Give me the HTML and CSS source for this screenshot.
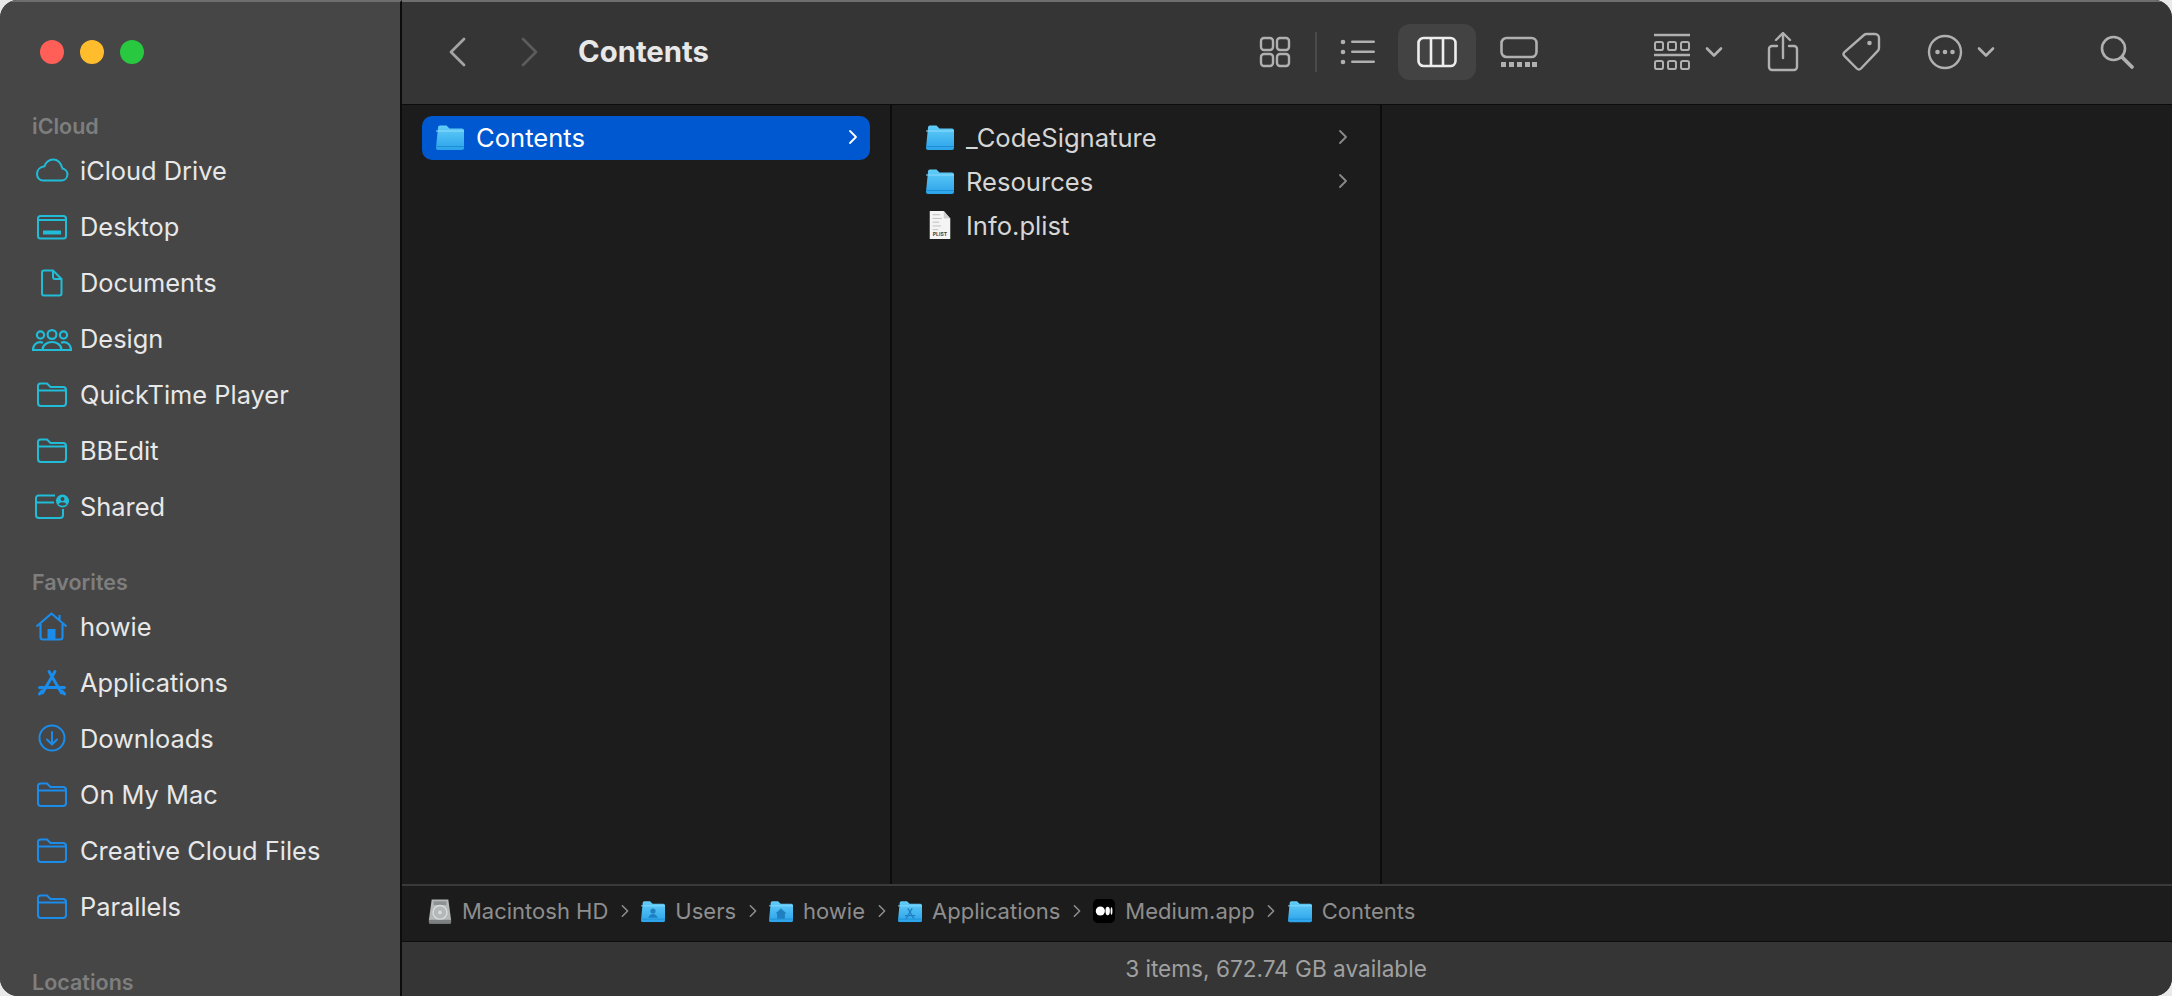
FILE: index.html
```html
<!DOCTYPE html>
<html lang="en">
<head>
<meta charset="utf-8">
<title>Contents</title>
<link rel="stylesheet" href="styles.css">
</head>
<body>
<svg class="defs" aria-hidden="true">
  <defs>
    <linearGradient id="fg" x1="0" y1="0" x2="0" y2="1">
      <stop offset="0" stop-color="#62cdf8"/>
      <stop offset="1" stop-color="#2ba3ea"/>
    </linearGradient>
    <symbol id="outline-folder" viewBox="0 0 40 32">
      <path d="M8.500 5.500h6.500l3.500 3.500h12.500a3 3 0 0 1 3 3v13a3 3 0 0 1-3 3H9a3 3 0 0 1-3-3V8a2.500 2.500 0 0 1 2.500-2.500z M6 12.500h28" fill="none" stroke="currentColor" stroke-width="2"/>
    </symbol>
    <symbol id="blue-folder" viewBox="0 0 28 26">
      <path d="M2 3.500a2 2 0 0 1 2-2h6.500l3 3H26a2 2 0 0 1 2 2V24a2 2 0 0 1-2 2H2a2 2 0 0 1-2-2z" fill="url(#fg)"/>
      <path d="M0 7h28" stroke="#8edcfb" stroke-width="1"/>
      <path d="M0 22.500h28" stroke="#1e8fd6" stroke-width="1"/>
    </symbol>
    <symbol id="chev" viewBox="0 0 10 16">
      <path d="M2 2l6 6-6 6" fill="none" stroke="currentColor" stroke-width="1.800" stroke-linecap="round" stroke-linejoin="round"/>
    </symbol>
    <symbol id="drop" viewBox="0 0 18 12">
      <path d="M2 2.500l7 7 7-7" fill="none" stroke="currentColor" stroke-width="2.600" stroke-linecap="round" stroke-linejoin="round"/>
    </symbol>
  </defs>
</svg>

<div class="window">
  <aside class="sidebar">
    <div class="lights">
      <span class="light red"></span><span class="light yellow"></span><span class="light green"></span>
    </div>
    <div class="heading">iCloud</div>
    <ul class="places cyan">
      <li class="place">
        <svg class="place-icon" viewBox="0 0 40 32"><path d="M11 26.500h18.500a6 6 0 0 0 1-11.900C29 9 25.500 5.500 21 5.500c-4 0-7.500 3-8.500 6.800C8 12.800 5 16 5 20c0 3.600 2.600 6.500 6 6.500z" fill="none" stroke="currentColor" stroke-width="2"/></svg>
        iCloud Drive</li>
      <li class="place">
        <svg class="place-icon" viewBox="0 0 40 32"><rect x="6" y="6" width="28" height="22.500" rx="2.500" fill="none" stroke="currentColor" stroke-width="2"/><path d="M6 10h28" stroke="currentColor" stroke-width="2"/><rect x="11" y="20.500" width="18" height="4" fill="currentColor"/></svg>
        Desktop</li>
      <li class="place">
        <svg class="place-icon" viewBox="0 0 40 32"><path d="M12 4.500h9l8.500 8.500v14.500a2 2 0 0 1-2 2H12a2 2 0 0 1-2-2v-21a2 2 0 0 1 2-2z M21 4.500V11a2 2 0 0 0 2 2h6.500" fill="none" stroke="currentColor" stroke-width="2"/></svg>
        Documents</li>
      <li class="place">
        <svg class="place-icon" viewBox="0 0 40 32"><g fill="none" stroke="currentColor" stroke-width="2.200"><circle cx="8.500" cy="13" r="3.600"/><circle cx="20" cy="12.500" r="4.400"/><circle cx="31.500" cy="13" r="3.600"/><path d="M10.500 28c0-5 4.500-8 9.500-8s9.500 3 9.500 8z"/><path d="M11 20.800c-1-.4-2-.6-3-.6-4 0-7 3.200-7 7.800h9.500M29 20.800c1-.4 2-.6 3-.6 4 0 7 3.200 7 7.800h-9.500"/></g></svg>
        Design</li>
      <li class="place"><svg class="place-icon"><use href="#outline-folder"/></svg>QuickTime Player</li>
      <li class="place"><svg class="place-icon"><use href="#outline-folder"/></svg>BBEdit</li>
      <li class="place">
        <svg class="place-icon" viewBox="0 0 40 32"><path d="M23 5.500H6.500A2.500 2.500 0 0 0 4 8v17a3 3 0 0 0 3 3h21a3 3 0 0 0 3-3v-6M4 12.500h18" fill="none" stroke="currentColor" stroke-width="2"/><circle cx="30.500" cy="11" r="6.500" fill="currentColor"/><circle cx="30.500" cy="9" r="2" fill="#464646"/><path d="M26.500 14.500c.8-1.600 2.200-2.300 4-2.300s3.200.7 4 2.300c-2.200 1.500-5.800 1.500-8 0z" fill="#464646"/></svg>
        Shared</li>
    </ul>
    <div class="heading heading-next">Favorites</div>
    <ul class="places blue">
      <li class="place">
        <svg class="place-icon" viewBox="0 0 40 32"><path d="M4.500 16.500L19.500 3.500l15 13M27.500 5v5.500M8.500 14v13a2.500 2.500 0 0 0 2.500 2.500h17a2.500 2.500 0 0 0 2.500-2.500V14" fill="none" stroke="currentColor" stroke-width="2.200" stroke-linejoin="round"/><rect x="15.500" y="19" width="8" height="10.500" fill="currentColor"/></svg>
        howie</li>
      <li class="place">
        <svg class="place-icon" viewBox="0 0 40 32"><path d="M17 5.500L29.500 27M23 5.500L10.500 27M7.500 21.500h25M7.500 28l2.500-3M32.500 28l-2.500-3" fill="none" stroke="currentColor" stroke-width="3" stroke-linecap="round"/></svg>
        Applications</li>
      <li class="place">
        <svg class="place-icon" viewBox="0 0 40 32"><circle cx="20" cy="16" r="12.500" fill="none" stroke="currentColor" stroke-width="2"/><path d="M20 10v12M15 17.500l5 5 5-5" fill="none" stroke="currentColor" stroke-width="2" stroke-linecap="round" stroke-linejoin="round"/></svg>
        Downloads</li>
      <li class="place"><svg class="place-icon"><use href="#outline-folder"/></svg>On My Mac</li>
      <li class="place"><svg class="place-icon"><use href="#outline-folder"/></svg>Creative Cloud Files</li>
      <li class="place"><svg class="place-icon"><use href="#outline-folder"/></svg>Parallels</li>
    </ul>
    <div class="heading heading-last">Locations</div>
  </aside>

  <main class="main">
    <header class="toolbar">
      <svg class="nav back" viewBox="0 0 24 32"><path d="M19 3L6 16l13 13" fill="none" stroke="currentColor" stroke-width="2.800" stroke-linecap="round" stroke-linejoin="round"/></svg>
      <svg class="nav forward" viewBox="0 0 24 32"><path d="M5 3l13 13L5 29" fill="none" stroke="currentColor" stroke-width="2.800" stroke-linecap="round" stroke-linejoin="round"/></svg>
      <h1 class="title">Contents</h1>
      <div class="tools">
        <svg class="tool t-grid" viewBox="0 0 32 32"><g fill="none" stroke="currentColor" stroke-width="2.400"><rect x="2" y="2" width="12" height="12" rx="3"/><rect x="18" y="2" width="12" height="12" rx="3"/><rect x="2" y="18" width="12" height="12" rx="3"/><rect x="18" y="18" width="12" height="12" rx="3"/></g></svg>
        <span class="sep"></span>
        <svg class="tool t-list" viewBox="0 0 36 32"><g fill="currentColor"><circle cx="4" cy="6" r="2.300"/><circle cx="4" cy="16" r="2.300"/><circle cx="4" cy="26" r="2.300"/><rect x="12" y="4.500" width="24" height="2.600" rx="1.300"/><rect x="12" y="14.500" width="24" height="2.600" rx="1.300"/><rect x="12" y="24.500" width="24" height="2.600" rx="1.300"/></g></svg>
        <span class="active-view">
          <svg class="t-col" viewBox="0 0 40 32"><g fill="none" stroke="currentColor" stroke-width="2.600"><rect x="1.500" y="2" width="37" height="28" rx="5"/><path d="M14 2v28M26 2v28"/></g></svg>
        </span>
        <svg class="tool t-gal" viewBox="0 0 40 32"><rect x="2.500" y="2" width="35" height="19" rx="5" fill="none" stroke="currentColor" stroke-width="2.600"/><g fill="currentColor"><rect x="2" y="26" width="5" height="5"/><rect x="10" y="26" width="5" height="5"/><rect x="18" y="26" width="5" height="5"/><rect x="26" y="26" width="5" height="5"/><rect x="33" y="26" width="5" height="5"/></g></svg>
        <svg class="tool t-group" viewBox="0 0 38 38"><g fill="none" stroke="currentColor" stroke-width="2"><path d="M1 2h36M1 22h36" stroke-width="2.400"/><rect x="2" y="9" width="8" height="8" rx="1.800"/><rect x="15" y="9" width="8" height="8" rx="1.800"/><rect x="28" y="9" width="8" height="8" rx="1.800"/><rect x="2" y="28" width="8" height="8" rx="1.800"/><rect x="15" y="28" width="8" height="8" rx="1.800"/><rect x="28" y="28" width="8" height="8" rx="1.800"/></g></svg>
        <svg class="tool t-drop"><use href="#drop"/></svg>
        <svg class="tool t-share" viewBox="0 0 32 40"><path d="M10 14H5a3 3 0 0 0-3 3v18a3 3 0 0 0 3 3h22a3 3 0 0 0 3-3V17a3 3 0 0 0-3-3h-5M16 26V2M9 8l7-7 7 7" fill="none" stroke="currentColor" stroke-width="2.400" stroke-linecap="round" stroke-linejoin="round"/></svg>
        <svg class="tool t-tag" viewBox="0 0 40 40"><path d="M26 2h8a4 4 0 0 1 4 4v10a4 4 0 0 1-1.200 2.800L20 36.500a3 3 0 0 1-4.200 0L3.500 24.200a3 3 0 0 1 0-4.200L23 3a4 4 0 0 1 3-1z" fill="none" stroke="currentColor" stroke-width="2.400"/><circle cx="28.500" cy="11" r="2.300" fill="currentColor"/></svg>
        <svg class="tool t-more" viewBox="0 0 38 38"><circle cx="19" cy="19" r="16" fill="none" stroke="currentColor" stroke-width="2.400"/><g fill="currentColor"><circle cx="11.500" cy="19" r="2.300"/><circle cx="19" cy="19" r="2.300"/><circle cx="26.500" cy="19" r="2.300"/></g></svg>
        <svg class="tool t-drop2"><use href="#drop"/></svg>
        <svg class="tool t-search" viewBox="0 0 36 36"><circle cx="14.500" cy="14.500" r="11.500" fill="none" stroke="currentColor" stroke-width="2.600"/><path d="M23 23l10 10" stroke="currentColor" stroke-width="3.800" stroke-linecap="round"/></svg>
      </div>
    </header>

    <section class="columns">
      <div class="col">
        <div class="row selected">
          <svg class="row-icon"><use href="#blue-folder"/></svg>
          <span class="row-name">Contents</span>
          <svg class="row-chev"><use href="#chev"/></svg>
        </div>
      </div>
      <div class="col">
        <div class="row">
          <svg class="row-icon"><use href="#blue-folder"/></svg>
          <span class="row-name">_CodeSignature</span>
          <svg class="row-chev"><use href="#chev"/></svg>
        </div>
        <div class="row">
          <svg class="row-icon"><use href="#blue-folder"/></svg>
          <span class="row-name">Resources</span>
          <svg class="row-chev"><use href="#chev"/></svg>
        </div>
        <div class="row">
          <svg class="row-icon" viewBox="0 0 28 30"><path d="M3 0h15l7 8v22H3z" fill="#f4f4f4"/><path d="M18 0v8h7z" fill="#cfcfcf"/><g stroke="#bcbcbc" stroke-width="1"><path d="M6 4h8M6 8h10M6 12h7M6 16h9M6 20h6"/></g><text class="plist" x="14" y="27" text-anchor="middle">PLIST</text></svg>
          <span class="row-name">Info.plist</span>
        </div>
      </div>
      <div class="col col-last"></div>
    </section>

    <nav class="pathbar">
      <span class="crumb">
        <svg class="crumb-icon disk" viewBox="0 0 26 28"><path d="M4 1h18l3 22v2a2 2 0 0 1-2 2H3a2 2 0 0 1-2-2v-2z" fill="#b4b8b8"/><rect x="6" y="3" width="14" height="4" fill="#8d9191"/><circle cx="13" cy="15" r="7.500" fill="none" stroke="#dadcdc" stroke-width="1.500"/><circle cx="13" cy="15" r="2" fill="#dadcdc"/><rect x="1" y="23" width="24" height="4" fill="#7d8080"/></svg>
        Macintosh HD</span>
      <svg class="crumb-chev"><use href="#chev"/></svg>
      <span class="crumb">
        <svg class="crumb-icon" viewBox="0 0 28 26"><use href="#blue-folder" width="28" height="26"/><circle cx="14" cy="13" r="3" fill="#1f7fc0"/><path d="M8.500 21c.8-3 3-4.500 5.500-4.500s4.700 1.500 5.500 4.500z" fill="#1f7fc0"/></svg>
        Users</span>
      <svg class="crumb-chev"><use href="#chev"/></svg>
      <span class="crumb">
        <svg class="crumb-icon" viewBox="0 0 28 26"><use href="#blue-folder" width="28" height="26"/><path d="M7.500 16L14 10l6.500 6h-2v6h-9v-6z" fill="#1f7fc0"/></svg>
        howie</span>
      <svg class="crumb-chev"><use href="#chev"/></svg>
      <span class="crumb">
        <svg class="crumb-icon" viewBox="0 0 28 26"><use href="#blue-folder" width="28" height="26"/><path d="M11.500 10l7 12M16.500 10l-7 12M8 18.500h12" fill="none" stroke="#1f7fc0" stroke-width="1.500"/></svg>
        Applications</span>
      <svg class="crumb-chev"><use href="#chev"/></svg>
      <span class="crumb">
        <svg class="crumb-icon medium" viewBox="0 0 24 26"><rect width="24" height="26" rx="5" fill="#000"/><circle cx="8" cy="13" r="5" fill="#fff"/><ellipse cx="16" cy="13" rx="2.400" ry="4.600" fill="#fff"/><ellipse cx="20.200" cy="13" rx="1" ry="4" fill="#fff"/></svg>
        Medium.app</span>
      <svg class="crumb-chev"><use href="#chev"/></svg>
      <span class="crumb">
        <svg class="crumb-icon"><use href="#blue-folder"/></svg>
        Contents</span>
    </nav>

    <footer class="status">3 items, 672.74 GB available</footer>
  </main>
</div>
</body>
</html>
```

FILE: styles.css
```css
* { box-sizing: border-box; }

html, body {
  margin: 0;
  height: 100%;
  background: #e9e9e9;
}

body {
  overflow: hidden;
  font-family: Inter, "Liberation Sans", sans-serif;
}

.defs {
  position: absolute;
  width: 0;
  height: 0;
}

.window {
  display: flex;
  width: 2172px;
  height: 996px;
  overflow: hidden;
  border-radius: 18px;
  background: #464646;
}

/* Sidebar */
.sidebar {
  flex: none;
  width: 402px;
  height: 996px;
  overflow: hidden;
  padding: 38px 0 0 32px;
  background: #464646;
  border-right: 2px solid #0c0c0c;
  border-top: 2px solid #6e6e6e;
}

.lights {
  display: flex;
  gap: 16px;
  padding-left: 8px;
}

.light {
  width: 24px;
  height: 24px;
  border-radius: 50%;
}

.red { background: #ff5f57; }
.yellow { background: #ffbd2e; }
.green { background: #28c840; }

.heading {
  margin: 47px 0 1px;
  height: 30px;
  line-height: 30px;
  font-size: 21.500px;
  font-weight: 600;
  color: #7e7e7e;
}

.heading-next {
  margin-top: 33px;
  margin-bottom: 1px;
}

.heading-last {
  margin-top: 33px;
  margin-bottom: 0;
}

.places {
  list-style: none;
  margin: 0;
  padding: 0;
}

.cyan .place-icon { color: #21bcd8; }
.blue .place-icon { color: #1a8ceb; }

.place {
  display: flex;
  align-items: center;
  gap: 8px;
  height: 56px;
  font-size: 25.400px;
  color: #e8e8e8;
}

.place-icon {
  flex: none;
  width: 40px;
  height: 32px;
}

/* Main */
.main {
  flex: 1;
  min-width: 0;
  display: flex;
  flex-direction: column;
  height: 996px;
}

.toolbar {
  flex: none;
  display: flex;
  align-items: center;
  height: 105px;
  padding: 0 37px 3px 43px;
  background: #353535;
  border-top: 2px solid #6e6e6e;
  border-bottom: 1px solid #0c0c0c;
}

.nav {
  flex: none;
  width: 24px;
  height: 32px;
}

.back { color: #a4a4a4; }
.forward { color: #5c5c5c; margin-left: 49px; }

.title {
  margin: 0 0 0 36px;
  font-size: 29.300px;
  font-weight: 700;
  color: #e8e8e8;
}

.tools {
  display: flex;
  align-items: center;
  margin-left: auto;
  color: #b0b0b0;
}

.tool { flex: none; }

.t-grid { width: 32px; height: 32px; }
.sep { width: 2px; height: 40px; margin: 0 22px 0 24px; background: #4b4b4b; }
.t-list { width: 36px; height: 32px; }
.active-view {
  display: flex;
  align-items: center;
  justify-content: center;
  width: 78px;
  height: 56px;
  margin-left: 23px;
  border-radius: 12px;
  background: #434343;
  color: #eeeeee;
}
.t-col { width: 40px; height: 32px; }
.t-gal { width: 40px; height: 32px; margin-left: 23px; }
.t-group { width: 38px; height: 38px; margin-left: 114px; }
.t-drop { width: 18px; height: 12px; margin-left: 14px; }
.t-share { width: 32px; height: 40px; margin-left: 44px; }
.t-tag { width: 40px; height: 40px; margin-left: 42px; }
.t-more { width: 38px; height: 38px; margin-left: 45px; }
.t-drop2 { width: 18px; height: 12px; margin-left: 13px; }
.t-search { width: 36px; height: 36px; margin-left: 104px; }

/* Columns */
.columns {
  flex: 1;
  min-height: 0;
  display: flex;
  background: #1c1c1c;
}

.col {
  flex: none;
  width: 490px;
  padding: 11px 20px 0 20px;
  border-right: 2px solid #0c0c0c;
}

.col-last {
  flex: 1;
  border-right: 0;
}

.row {
  display: flex;
  align-items: center;
  height: 44px;
  padding: 0 12px 2px 14px;
  border-radius: 10px;
  font-size: 25.600px;
  color: #d6d6d6;
}

.selected {
  background: #0058d0;
  color: #ffffff;
}

.row-icon {
  flex: none;
  width: 28px;
  height: 28px;
}

.row-name {
  margin-left: 12px;
}

.row-chev {
  flex: none;
  width: 10px;
  height: 16px;
  margin-left: auto;
  color: #8a8a8a;
}

.selected .row-chev { color: #ffffff; }

.plist {
  font-size: 5.500px;
  font-weight: 700;
  fill: #444444;
}

/* Path bar */
.pathbar {
  flex: none;
  display: flex;
  align-items: center;
  gap: 11.500px;
  height: 58px;
  padding: 0 0 5px 26px;
  background: #1c1c1c;
  border-top: 2px solid #3a3a3a;
  border-bottom: 1px solid #0c0c0c;
  font-size: 22px;
  color: #8e8e8e;
}

.crumb {
  display: flex;
  align-items: center;
  gap: 10px;
}

.crumb-icon {
  flex: none;
  width: 24px;
  height: 24px;
}

.disk { height: 27px; }
.medium { width: 22px; height: 24px; }

.crumb-chev {
  flex: none;
  width: 10px;
  height: 14px;
  color: #8e8e8e;
}

/* Status bar */
.status {
  flex: none;
  display: flex;
  align-items: center;
  justify-content: center;
  height: 54px;
  padding: 0 22px 2px 0;
  background: #353535;
  font-size: 22.600px;
  color: #a0a0a0;
}
```
